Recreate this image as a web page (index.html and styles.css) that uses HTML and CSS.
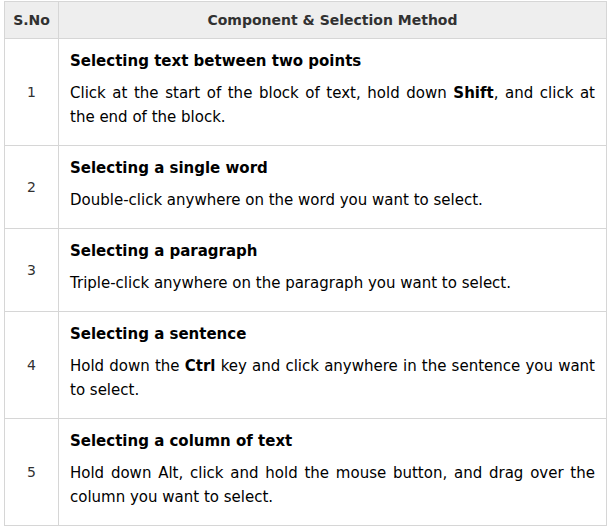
FILE: index.html
```html
<!DOCTYPE html>
<html>
<head>
<meta charset="utf-8">
<link rel="stylesheet" href="styles.css">
</head>
<body>
<table class="tbl">
  <thead>
    <tr>
      <th class="num-col">S.No</th>
      <th>Component &amp; Selection Method</th>
    </tr>
  </thead>
  <tbody>
    <tr>
      <td class="num">1</td>
      <td>
        <p class="title">Selecting text between two points</p>
        <p class="desc">Click at the start of the block of text, hold down <b>Shift</b>, and click at the end of the block.</p>
      </td>
    </tr>
    <tr>
      <td class="num">2</td>
      <td>
        <p class="title">Selecting a single word</p>
        <p class="desc">Double-click anywhere on the word you want to select.</p>
      </td>
    </tr>
    <tr>
      <td class="num">3</td>
      <td>
        <p class="title">Selecting a paragraph</p>
        <p class="desc">Triple-click anywhere on the paragraph you want to select.</p>
      </td>
    </tr>
    <tr>
      <td class="num">4</td>
      <td>
        <p class="title">Selecting a sentence</p>
        <p class="desc">Hold down the <b>Ctrl</b> key and click anywhere in the sentence you want to select.</p>
      </td>
    </tr>
    <tr>
      <td class="num">5</td>
      <td>
        <p class="title">Selecting a column of text</p>
        <p class="desc">Hold down Alt, click and hold the mouse button, and drag over the column you want to select.</p>
      </td>
    </tr>
  </tbody>
</table>
</body>
</html>
```

FILE: styles.css
```css
html, body {
  background: #fff;
}
body {
  margin: 1px 4px;
  font-family: "DejaVu Sans", Verdana, sans-serif;
  font-size: 15px;
  color: #000;
}
.tbl {
  width: 603px;
  border-collapse: collapse;
  border: 1px solid #d6d6d6;
}
.tbl th, .tbl td {
  border: 1px solid #d6d6d6;
}
.tbl th {
  background: #eeeeee;
  color: #313131;
  font-size: 14px;
  font-weight: bold;
  height: 36px;
  padding: 0 8px;
  text-align: center;
  vertical-align: middle;
}
.num-col {
  width: 37px;
}
.tbl td {
  padding: 10px 11px 10px 11px;
  vertical-align: middle;
  line-height: 24px;
}
.tbl td.num {
  text-align: center;
  color: #313131;
  font-size: 14px;
  padding: 0;
}
.title {
  margin: 0 0 8px;
  font-weight: bold;
}
.desc {
  margin: 0 0 6px;
  text-align: justify;
}
```
